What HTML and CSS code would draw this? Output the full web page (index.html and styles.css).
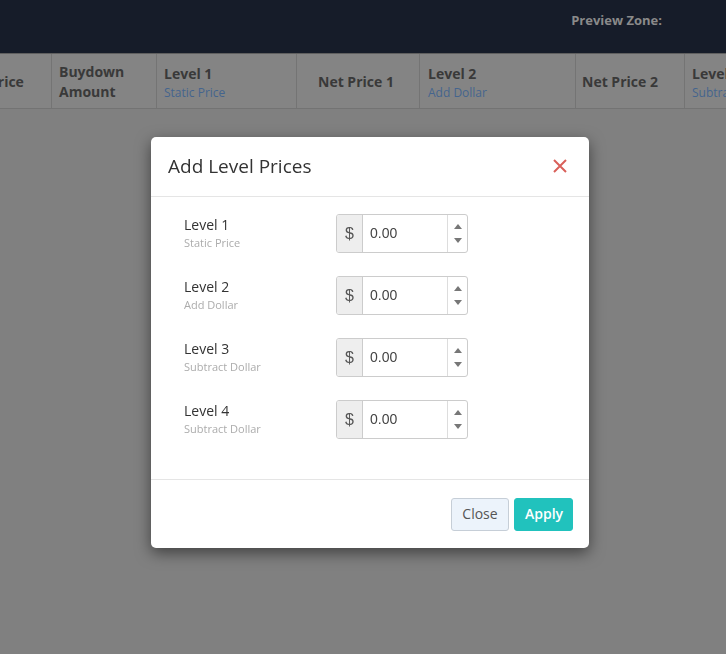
FILE: index.html
```html
<!DOCTYPE html>
<html>
<head>
<title>Add Level Prices</title>
<link rel="stylesheet" href="styles.css">
</head>
<body>

<div class="topbar">
  <span class="preview">Preview Zone:</span>
</div>

<div class="table-wrap">
  <div class="thead">
    <div class="th w-price">Price</div>
    <div class="th w-buy">Buydown<br>Amount</div>
    <div class="th w-lvl">Level 1<span class="sub">Static Price</span></div>
    <div class="th w-net">Net Price 1</div>
    <div class="th w-lvl2">Level 2<span class="sub">Add Dollar</span></div>
    <div class="th w-net2">Net Price 2</div>
    <div class="th w-last">Level 3<span class="sub">Subtract Dollar</span></div>
  </div>
</div>

<div class="backdrop"></div>

<div class="modal">
  <div class="modal-header">
    <h4 class="modal-title">Add Level Prices</h4>
    <button class="x-btn" type="button" aria-label="Close">
      <svg width="16" height="16" viewBox="0 0 16 16"><path d="M2 2 L14 14 M14 2 L2 14" stroke="#d9605a" stroke-width="2" fill="none"/></svg>
    </button>
  </div>

  <div class="modal-body">
    <div class="level-row">
      <div class="level-label">Level 1<span class="level-sub">Static Price</span></div>
      <div class="input-group">
        <span class="addon">$</span>
        <span class="value">0.00</span>
        <span class="spin"><i class="up"></i><i class="down"></i></span>
      </div>
    </div>
    <div class="level-row">
      <div class="level-label">Level 2<span class="level-sub">Add Dollar</span></div>
      <div class="input-group">
        <span class="addon">$</span>
        <span class="value">0.00</span>
        <span class="spin"><i class="up"></i><i class="down"></i></span>
      </div>
    </div>
    <div class="level-row">
      <div class="level-label">Level 3<span class="level-sub">Subtract Dollar</span></div>
      <div class="input-group">
        <span class="addon">$</span>
        <span class="value">0.00</span>
        <span class="spin"><i class="up"></i><i class="down"></i></span>
      </div>
    </div>
    <div class="level-row">
      <div class="level-label">Level 4<span class="level-sub">Subtract Dollar</span></div>
      <div class="input-group">
        <span class="addon">$</span>
        <span class="value">0.00</span>
        <span class="spin"><i class="up"></i><i class="down"></i></span>
      </div>
    </div>
  </div>

  <div class="modal-footer">
    <button type="button" class="btn btn-close">Close</button>
    <button type="button" class="btn btn-apply">Apply</button>
  </div>
</div>

</body>
</html>
```

FILE: styles.css
```css
body {
  margin: 0;
  font-family: "Open Sans", Arial, sans-serif;
  background-color: #808080;
  overflow: hidden;
  height: 654px;
}
.topbar {
  height: 53px;
  background-color: #161c29;
  display: flex;
  align-items: center;
  justify-content: flex-end;
  padding-right: 64px;
  box-sizing: border-box;
}
.preview {
  color: #8a8a8a;
  font-weight: bold;
  font-size: 13px;
  margin-top: -14px;
}
.table-wrap {
  overflow: hidden;
  background-color: #848484;
  border-top: 1px solid #5f5f5f;
  border-bottom: 1px solid #737373;
}
.thead {
  display: flex;
  margin-left: -68px;
  height: 54px;
}
.th {
  box-sizing: border-box;
  flex: none;
  padding: 2px 7px 0;
  border-right: 1px solid #747474;
  color: #393939;
  font-weight: bold;
  font-size: 14px;
  line-height: 20px;
  display: flex;
  flex-direction: column;
  justify-content: center;
}
.th .sub {
  font-weight: normal;
  font-size: 12px;
  line-height: 17px;
  color: #45648e;
}
.w-price { width: 120px; padding-left: 57px; }
.w-buy { width: 105px; }
.w-lvl { width: 140px; }
.w-net { width: 123px; padding-left: 21px; }
.w-lvl2 { width: 156px; padding-left: 8px; }
.w-net2 { width: 109px; padding-left: 6px; }
.w-last { width: 120px; border-right: none; }
.backdrop {
  position: fixed;
  inset: 0;
  background: rgba(0, 0, 0, 0);
}
.modal {
  position: absolute;
  left: 151px;
  top: 137px;
  width: 438px;
  height: 411px;
  background-color: #fff;
  border-radius: 5px;
  box-shadow: 0 5px 15px rgba(0, 0, 0, 0.5);
  display: flex;
  flex-direction: column;
}
.modal-header {
  height: 59px;
  border-bottom: 1px solid #e5e5e5;
  display: flex;
  align-items: center;
  justify-content: space-between;
  padding: 0 21px 0 17px;
  flex: none;
}
.modal-title {
  margin: -2px 0 0;
  font-weight: normal;
  font-size: 19px;
  color: #333;
}
.x-btn {
  border: none;
  background: none;
  padding: 0;
  width: 16px;
  height: 16px;
  display: flex;
  margin-top: -2px;
}
.modal-body {
  flex: 1;
  padding: 17px 33px 0;
  display: flex;
  flex-direction: column;
  gap: 23px;
}
.level-row {
  display: flex;
  align-items: center;
  height: 39px;
}
.level-label {
  width: 152px;
  display: flex;
  flex-direction: column;
  font-size: 14px;
  line-height: 18px;
  color: #333;
  margin-top: -1px;
}
.level-sub {
  font-size: 11px;
  line-height: 17px;
  color: #acacac;
}
.input-group {
  display: flex;
  height: 39px;
  width: 132px;
  box-sizing: border-box;
  border: 1px solid #ccc;
  border-radius: 3px;
  overflow: hidden;
}
.addon {
  width: 25px;
  background-color: #eee;
  border-right: 1px solid #ccc;
  display: flex;
  align-items: center;
  justify-content: center;
  font-family: "Liberation Sans", Arial, sans-serif;
  font-size: 16px;
  color: #555;
}
.value {
  flex: 1;
  display: flex;
  align-items: center;
  padding-left: 7px;
  font-size: 14px;
  color: #444;
  font-family: "Liberation Sans", Arial, sans-serif;
  padding-bottom: 2px;
}
.spin {
  width: 20px;
  border-left: 1px solid #ddd;
  display: flex;
  flex-direction: column;
  align-items: center;
  justify-content: space-around;
  padding: 4px 0;
  box-sizing: border-box;
}
.spin i {
  width: 0;
  height: 0;
  border-left: 4px solid transparent;
  border-right: 4px solid transparent;
}
.spin .up { border-bottom: 5px solid #777; }
.spin .down { border-top: 5px solid #777; }
.modal-footer {
  height: 68px;
  border-top: 1px solid #e5e5e5;
  display: flex;
  justify-content: flex-end;
  align-items: center;
  gap: 5px;
  padding: 0 16px;
  flex: none;
}
.btn {
  height: 33px;
  padding: 0 10px 2px;
  border-radius: 3px;
  font-family: "Open Sans", Arial, sans-serif;
  font-size: 14px;
  cursor: pointer;
}
.btn-close {
  width: 58px;
  background-color: #ecf3fb;
  border: 1px solid #c6ced7;
  color: #555;
}
.btn-apply {
  width: 59px;
  background-color: #21c2bd;
  border: 1px solid #21c2bd;
  color: #fff;
  font-weight: 600;
}
```
